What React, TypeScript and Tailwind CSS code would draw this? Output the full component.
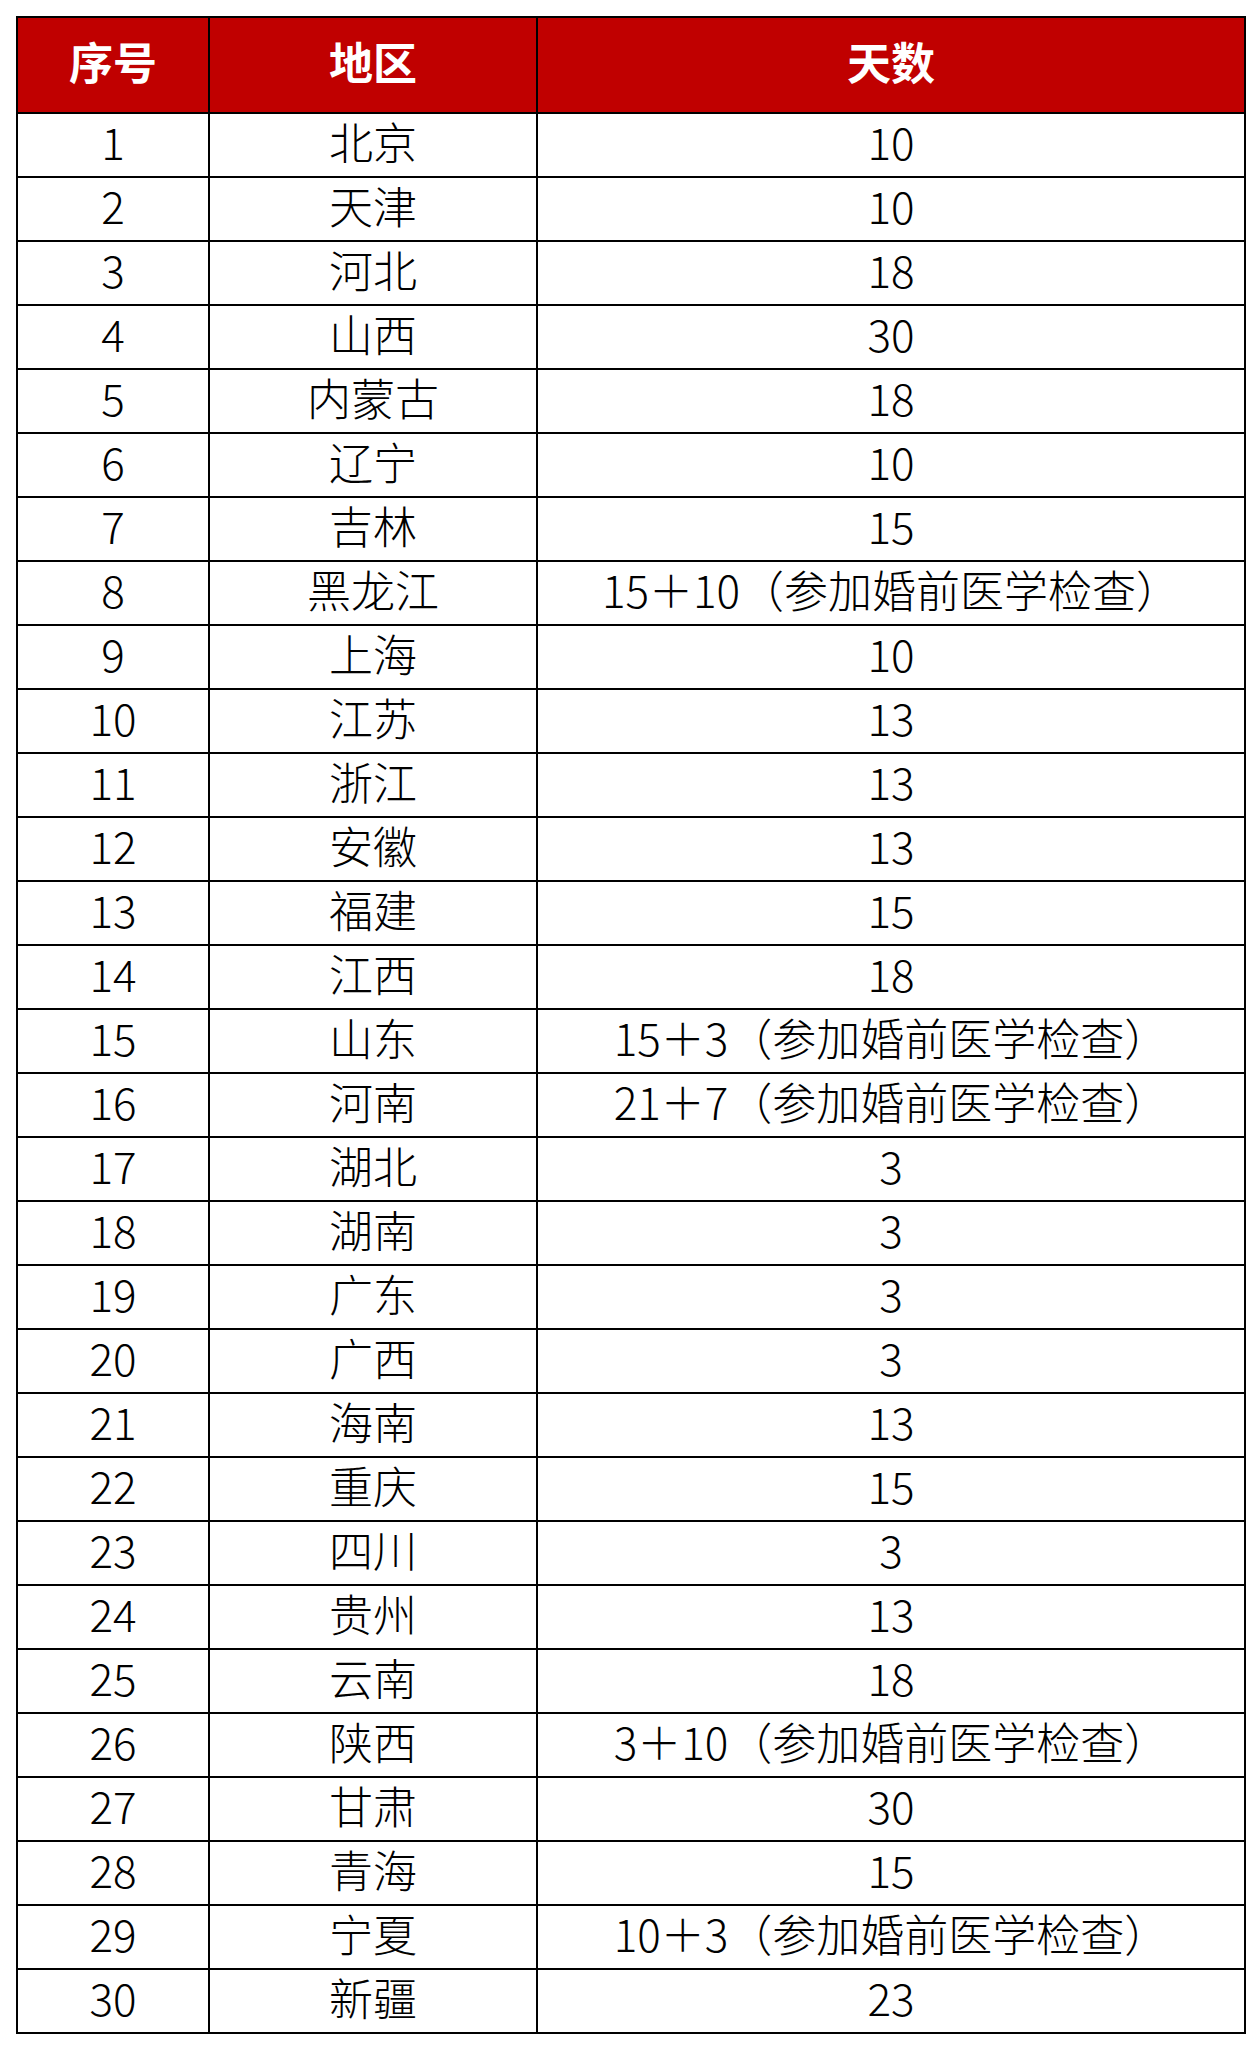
import React from "react";

type Row = { id: number; region: string; days: string };

const rows: Row[] = [
  { id: 1, region: "北京", days: "10" },
  { id: 2, region: "天津", days: "10" },
  { id: 3, region: "河北", days: "18" },
  { id: 4, region: "山西", days: "30" },
  { id: 5, region: "内蒙古", days: "18" },
  { id: 6, region: "辽宁", days: "10" },
  { id: 7, region: "吉林", days: "15" },
  { id: 8, region: "黑龙江", days: "15＋10（参加婚前医学检查）" },
  { id: 9, region: "上海", days: "10" },
  { id: 10, region: "江苏", days: "13" },
  { id: 11, region: "浙江", days: "13" },
  { id: 12, region: "安徽", days: "13" },
  { id: 13, region: "福建", days: "15" },
  { id: 14, region: "江西", days: "18" },
  { id: 15, region: "山东", days: "15＋3（参加婚前医学检查）" },
  { id: 16, region: "河南", days: "21＋7（参加婚前医学检查）" },
  { id: 17, region: "湖北", days: "3" },
  { id: 18, region: "湖南", days: "3" },
  { id: 19, region: "广东", days: "3" },
  { id: 20, region: "广西", days: "3" },
  { id: 21, region: "海南", days: "13" },
  { id: 22, region: "重庆", days: "15" },
  { id: 23, region: "四川", days: "3" },
  { id: 24, region: "贵州", days: "13" },
  { id: 25, region: "云南", days: "18" },
  { id: 26, region: "陕西", days: "3＋10（参加婚前医学检查）" },
  { id: 27, region: "甘肃", days: "30" },
  { id: 28, region: "青海", days: "15" },
  { id: 29, region: "宁夏", days: "10＋3（参加婚前医学检查）" },
  { id: 30, region: "新疆", days: "23" },
];

const font = "[font-family:'Noto_Sans_CJK_SC','Noto_Sans',sans-serif]";

export default function App() {
  return (
    <div className={`min-h-[2048px] w-[1260px] bg-white pl-[16px] pt-[16px] ${font}`}>
      <table className="w-[1228px] table-fixed border-collapse border-2 border-black">
        <colgroup>
          <col className="w-[192px]" />
          <col className="w-[328px]" />
          <col className="w-[708px]" />
        </colgroup>
        <thead>
          <tr className="h-[96px] bg-[#c00000] text-white">
            <th className="border-2 border-black p-0 pb-[8px] text-[44px] font-bold leading-none">序号</th>
            <th className="border-2 border-black p-0 pb-[8px] text-[44px] font-bold leading-none">地区</th>
            <th className="border-2 border-black p-0 pb-[8px] text-[44px] font-bold leading-none">天数</th>
          </tr>
        </thead>
        <tbody>
          {rows.map((r) => (
            <tr key={r.id} className="h-[64px] text-black">
              <td className="border-2 border-black p-0 pb-[8px] text-center text-[44px] font-light leading-none">{r.id}</td>
              <td className="border-2 border-black p-0 pb-[8px] text-center text-[44px] font-light leading-none">{r.region}</td>
              <td className="border-2 border-black p-0 pb-[8px] text-center text-[44px] font-light leading-none">{r.days}</td>
            </tr>
          ))}
        </tbody>
      </table>
    </div>
  );
}
